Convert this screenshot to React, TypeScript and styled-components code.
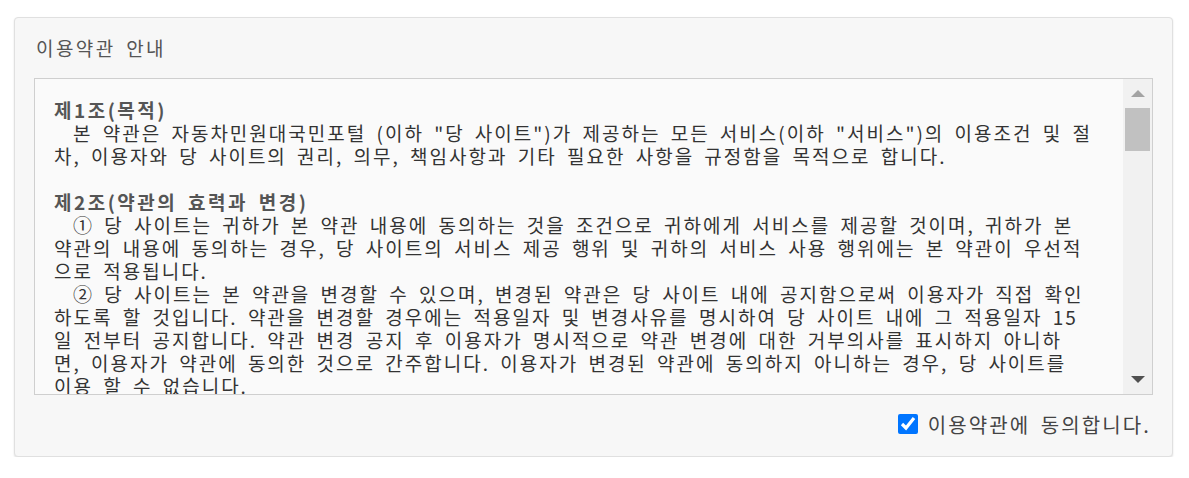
import styled, { createGlobalStyle } from 'styled-components';

const GlobalStyle = createGlobalStyle`
  html, body {
    margin: 0;
    padding: 0;
    background: #fff;
  }
  body {
    font-family: "Noto Sans CJK KR", "Noto Sans", sans-serif;
    color: #333;
  }
`;

const Panel = styled.section`
  margin: 17px 16px 0 14px;
  padding: 14px 19px 20px;
  background: #f7f7f7;
  border: 1px solid #e0e0e0;
  border-radius: 4px;
  box-shadow: 0 1px 2px rgba(0, 0, 0, 0.12);
`;

const Title = styled.h2`
  margin: 0 0 14px;
  padding-left: 2px;
  font-size: 19px;
  font-weight: 400;
  line-height: 32px;
  letter-spacing: 2.4px;
  word-spacing: 4px;
  color: #555;
`;

const TermsBox = styled.div`
  display: flex;
  box-sizing: border-box;
  height: 317px;
  background: #fafafa;
  border: 1px solid #cfcfcf;
`;

const TermsBody = styled.div`
  flex: 1;
  overflow: hidden;
  padding: 19px 19px 0;
`;

const Article = styled.article`
  & + & {
    margin-top: 23px;
  }
`;

const ArticleTitle = styled.h3`
  margin: 0;
  font-size: 19px;
  font-weight: 700;
  line-height: 23px;
  letter-spacing: 2.5px;
  word-spacing: 4px;
  color: #555;
`;

const Paragraph = styled.p`
  margin: 0;
  white-space: pre;
  text-indent: 19px;
  font-size: 19px;
  line-height: 23px;
  letter-spacing: 2px;
  word-spacing: 4px;
  color: #333;
`;

const ScrollTrack = styled.div`
  display: flex;
  flex-direction: column;
  width: 29px;
  background: #f1f1f1;
`;

const ArrowButton = styled.div<{ $dir: 'up' | 'down'; $active?: boolean }>`
  display: flex;
  align-items: center;
  justify-content: center;
  height: 29px;

  &::before {
    content: '';
    width: 0;
    height: 0;
    border-left: 7px solid transparent;
    border-right: 7px solid transparent;
    ${({ $dir, $active }) =>
      $dir === 'up'
        ? `border-bottom: 7px solid ${$active ? '#505050' : '#a3a3a3'};`
        : `border-top: 7px solid ${$active ? '#505050' : '#a3a3a3'};`}
  }
`;

const Rail = styled.div`
  flex: 1;
  padding: 0 2px;
`;

const Thumb = styled.div`
  height: 43px;
  background: #c1c1c1;
`;

const AgreeRow = styled.label`
  display: flex;
  align-items: center;
  justify-content: flex-end;
  gap: 10px;
  height: 24px;
  margin-top: 17px;
  padding-right: 2px;
  font-size: 20px;
  letter-spacing: 2.1px;
  word-spacing: 4px;
  color: #444;
  cursor: pointer;
`;

const Checkbox = styled.input`
  width: 20px;
  height: 20px;
  margin: 0;
  accent-color: #0075ff;
`;

interface Clause {
  title: string;
  paragraphs: string[][];
}

const clauses: Clause[] = [
  {
    title: '제1조(목적)',
    paragraphs: [
      [
        '본 약관은 자동차민원대국민포털 (이하 "당 사이트")가 제공하는 모든 서비스(이하 "서비스")의 이용조건 및 절',
        '차, 이용자와 당 사이트의 권리, 의무, 책임사항과 기타 필요한 사항을 규정함을 목적으로 합니다.',
      ],
    ],
  },
  {
    title: '제2조(약관의 효력과 변경)',
    paragraphs: [
      [
        '① 당 사이트는 귀하가 본 약관 내용에 동의하는 것을 조건으로 귀하에게 서비스를 제공할 것이며, 귀하가 본',
        '약관의 내용에 동의하는 경우, 당 사이트의 서비스 제공 행위 및 귀하의 서비스 사용 행위에는 본 약관이 우선적',
        '으로 적용됩니다.',
      ],
      [
        '② 당 사이트는 본 약관을 변경할 수 있으며, 변경된 약관은 당 사이트 내에 공지함으로써 이용자가 직접 확인',
        '하도록 할 것입니다. 약관을 변경할 경우에는 적용일자 및 변경사유를 명시하여 당 사이트 내에 그 적용일자 15',
        '일 전부터 공지합니다. 약관 변경 공지 후 이용자가 명시적으로 약관 변경에 대한 거부의사를 표시하지 아니하',
        '면, 이용자가 약관에 동의한 것으로 간주합니다. 이용자가 변경된 약관에 동의하지 아니하는 경우, 당 사이트를',
        '이용 할 수 없습니다.',
      ],
    ],
  },
];

export default function App() {
  return (
    <>
      <GlobalStyle />
      <Panel>
        <Title>이용약관 안내</Title>
        <TermsBox>
          <TermsBody>
            {clauses.map((clause) => (
              <Article key={clause.title}>
                <ArticleTitle>{clause.title}</ArticleTitle>
                {clause.paragraphs.map((lines, i) => (
                  <Paragraph key={i}>{lines.join('\n')}</Paragraph>
                ))}
              </Article>
            ))}
          </TermsBody>
          <ScrollTrack>
            <ArrowButton $dir="up" />
            <Rail>
              <Thumb />
            </Rail>
            <ArrowButton $dir="down" $active />
          </ScrollTrack>
        </TermsBox>
        <AgreeRow>
          <Checkbox type="checkbox" defaultChecked />
          이용약관에 동의합니다.
        </AgreeRow>
      </Panel>
    </>
  );
}
